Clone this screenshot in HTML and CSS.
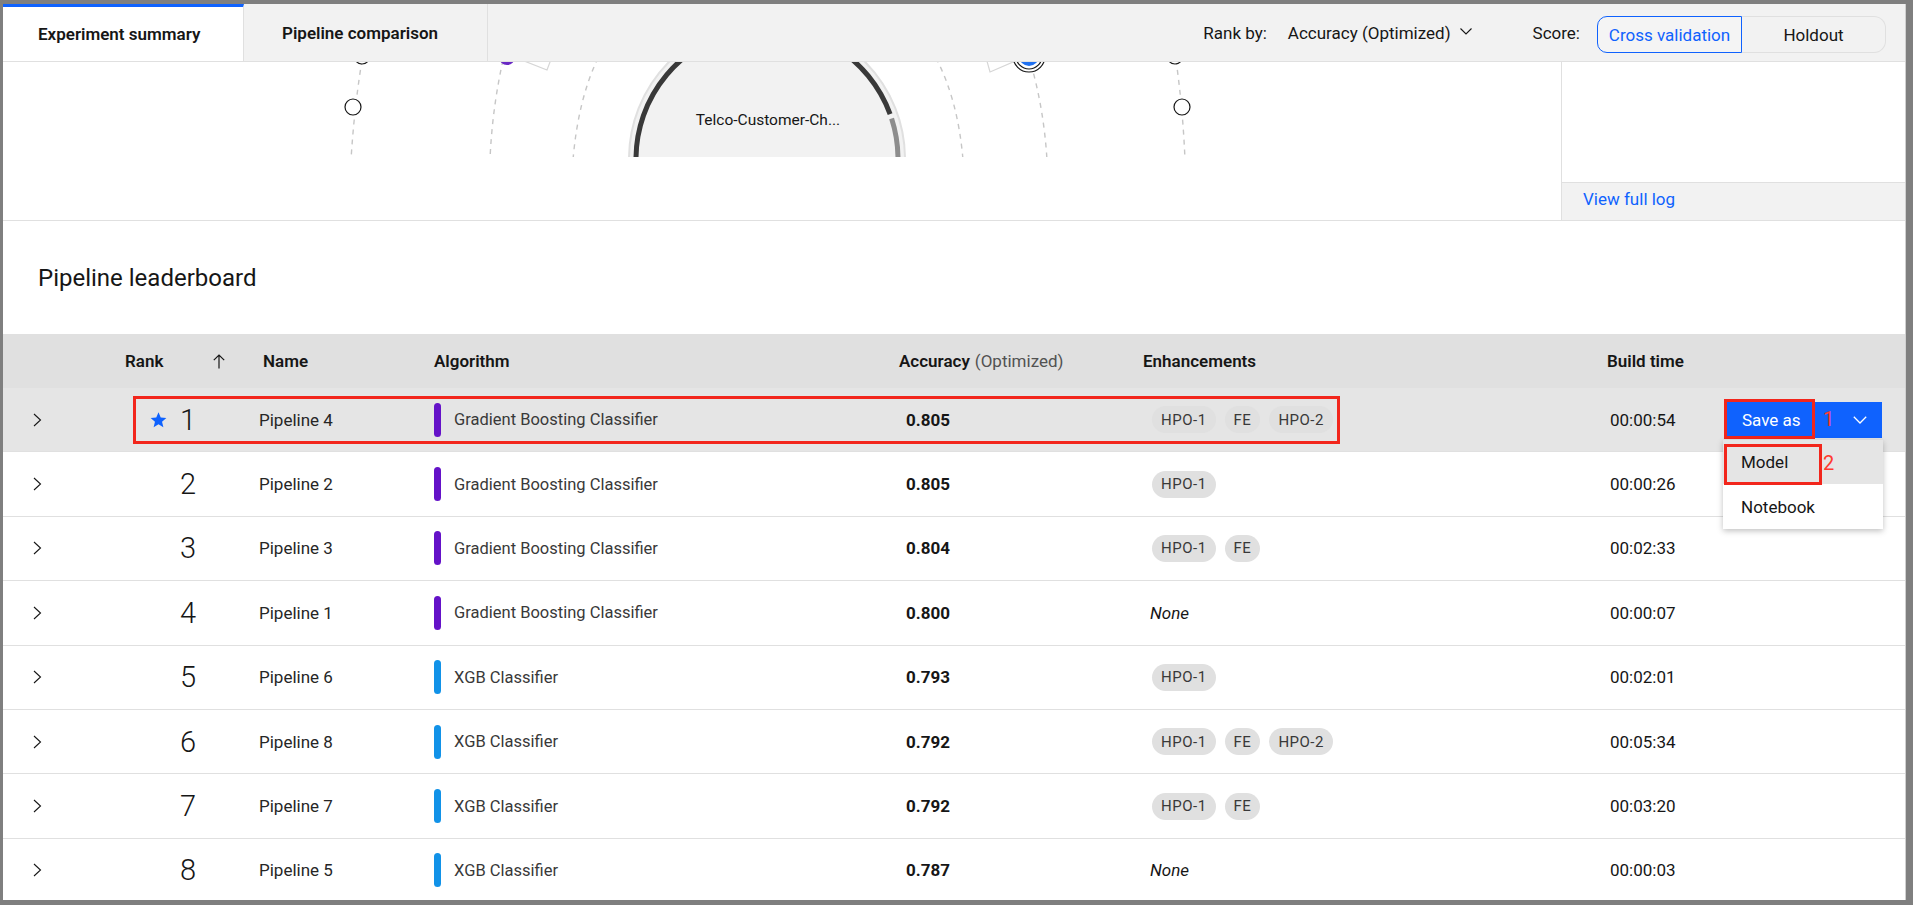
FILE: index.html
```html
<!DOCTYPE html>
<html lang="en">
<head>
<meta charset="utf-8">
<title>Experiment summary</title>
<link rel="stylesheet" href="styles.css">
</head>
<body>
<div class="frame">
  <header class="tabbar">
    <div class="tab tab-active">Experiment summary</div>
    <div class="tab tab-second">Pipeline comparison</div>
    <div class="tools">
      <span class="tool-label">Rank by:</span>
      <span class="tool-value">Accuracy (Optimized)</span>
      <svg class="caret" width="12" height="7" viewBox="0 0 12 7"><polyline points="0.5,0.5 6,6 11.5,0.5" fill="none" stroke="#161616" stroke-width="1.1"/></svg>
      <span class="tool-label score-label">Score:</span>
      <div class="seg">
        <span class="seg-item seg-on">Cross validation</span>
        <span class="seg-item seg-off">Holdout</span>
      </div>
    </div>
  </header>

  <section class="summary">
    <div class="diagram">
      <svg class="diagram-svg" width="1559" height="95" viewBox="3 62 1559 95">
        <g fill="none" stroke="#c6c6c6" stroke-width="1.4" stroke-dasharray="5 5">
          <path d="M362 60 Q354 110 351 160"/>
          <path d="M503 60 Q492 110 490 160"/>
          <path d="M598 58 Q578 100 573 160"/>
          <path d="M936 58 Q958 100 963 160"/>
          <path d="M1031 64 Q1044 110 1047 160"/>
          <path d="M1176 60 Q1183 110 1185 160"/>
        </g>
        <polyline points="514,57 547,70 553,54" fill="#fff" stroke="#d6d6d6" stroke-width="1.2"/>
        <polyline points="985,54 990,72 1020,59" fill="#fff" stroke="#d6d6d6" stroke-width="1.2"/>
        <circle cx="507" cy="57" r="8" fill="#6929c4"/>
        <circle cx="1029" cy="56" r="16" fill="#fff" stroke="#161616" stroke-width="1.2"/>
        <circle cx="1029" cy="56" r="13" fill="#fff" stroke="#161616" stroke-width="1.2"/>
        <circle cx="1029" cy="56" r="10" fill="#1f70f0"/>
        <circle cx="362" cy="56" r="8" fill="#fff" stroke="#161616" stroke-width="1.2"/>
        <circle cx="353" cy="107" r="8" fill="#fff" stroke="#161616" stroke-width="1.2"/>
        <circle cx="1175" cy="56" r="8" fill="#fff" stroke="#161616" stroke-width="1.2"/>
        <circle cx="1182" cy="107" r="8" fill="#fff" stroke="#161616" stroke-width="1.2"/>
        <circle cx="767" cy="159" r="138" fill="#f2f2f2" stroke="#e0e0e0" stroke-width="2"/>
        <path d="M636 159 A131 131 0 0 1 890.1 114.2" fill="none" stroke="#393939" stroke-width="5"/>
        <path d="M891.6 118.5 A131 131 0 0 1 898 159" fill="none" stroke="#8d8d8d" stroke-width="5"/>
        <text x="768" y="125" text-anchor="middle" class="node-label">Telco-Customer-Ch...</text>
      </svg>
    </div>
    <aside class="log">
      <div class="log-body"></div>
      <div class="log-foot"><span class="link">View full log</span></div>
    </aside>
  </section>

  <section class="leaderboard">
    <h2 class="lb-title">Pipeline leaderboard</h2>
    <div class="table">
      <div class="trow thead">
        <div class="c c0"></div>
        <div class="c c1 h-rank"><span>Rank</span>
          <svg class="sort" width="12" height="15" viewBox="0 0 12 15"><path d="M6 14.5V1 M0.8 6.2 L6 1 L11.2 6.2" fill="none" stroke="#161616" stroke-width="1.2"/></svg>
        </div>
        <div class="c c2 h-name">Name</div>
        <div class="c c3 h-alg">Algorithm</div>
        <div class="c c4 h-acc">Accuracy <span class="muted">(Optimized)</span></div>
        <div class="c c5 h-enh">Enhancements</div>
        <div class="c c6 h-time">Build time</div>
        <div class="c c7"></div>
      </div>

      <div class="trow tbody selected">
        <div class="c c0"><svg class="chev" width="9" height="14" viewBox="0 0 9 14"><polyline points="1,1 7.5,7 1,13" fill="none" stroke="#161616" stroke-width="1.1"/></svg></div>
        <div class="c c1 rank"><svg class="star" width="17" height="16" viewBox="0 0 24 23"><polygon points="12,0.5 15.2,8 23.3,8.6 17.1,13.9 19,21.8 12,17.6 5,21.8 6.9,13.9 0.7,8.6 8.8,8" fill="#0f62fe"/></svg><span class="num">1</span></div>
        <div class="c c2 name">Pipeline 4</div>
        <div class="c c3 alg"><span class="bar purple"></span>Gradient Boosting Classifier</div>
        <div class="c c4 acc">0.805</div>
        <div class="c c5 enh"><span class="tag">HPO-1</span><span class="tag">FE</span><span class="tag">HPO-2</span></div>
        <div class="c c6 time">00:00:54</div>
        <div class="c c7 actions">
          <div class="savebtn">
            <div class="save-main">Save as</div>
            <span class="note note1">1</span>
            <svg class="save-caret" width="14" height="8" viewBox="0 0 14 8"><polyline points="0.8,0.8 7,7 13.2,0.8" fill="none" stroke="#fff" stroke-width="1.3"/></svg>
          </div>
          <div class="menu">
            <div class="menu-item menu-hover"><span>Model</span></div>
            <div class="menu-item"><span>Notebook</span></div>
            <span class="note note2">2</span>
          </div>
        </div>
        <div class="row-mark"></div>
      </div>

      <div class="trow tbody">
        <div class="c c0"><svg class="chev" width="9" height="14" viewBox="0 0 9 14"><polyline points="1,1 7.5,7 1,13" fill="none" stroke="#161616" stroke-width="1.1"/></svg></div>
        <div class="c c1 rank"><span class="num">2</span></div>
        <div class="c c2 name">Pipeline 2</div>
        <div class="c c3 alg"><span class="bar purple"></span>Gradient Boosting Classifier</div>
        <div class="c c4 acc">0.805</div>
        <div class="c c5 enh"><span class="tag">HPO-1</span></div>
        <div class="c c6 time">00:00:26</div>
        <div class="c c7"></div>
      </div>

      <div class="trow tbody">
        <div class="c c0"><svg class="chev" width="9" height="14" viewBox="0 0 9 14"><polyline points="1,1 7.5,7 1,13" fill="none" stroke="#161616" stroke-width="1.1"/></svg></div>
        <div class="c c1 rank"><span class="num">3</span></div>
        <div class="c c2 name">Pipeline 3</div>
        <div class="c c3 alg"><span class="bar purple"></span>Gradient Boosting Classifier</div>
        <div class="c c4 acc">0.804</div>
        <div class="c c5 enh"><span class="tag">HPO-1</span><span class="tag">FE</span></div>
        <div class="c c6 time">00:02:33</div>
        <div class="c c7"></div>
      </div>

      <div class="trow tbody">
        <div class="c c0"><svg class="chev" width="9" height="14" viewBox="0 0 9 14"><polyline points="1,1 7.5,7 1,13" fill="none" stroke="#161616" stroke-width="1.1"/></svg></div>
        <div class="c c1 rank"><span class="num">4</span></div>
        <div class="c c2 name">Pipeline 1</div>
        <div class="c c3 alg"><span class="bar purple"></span>Gradient Boosting Classifier</div>
        <div class="c c4 acc">0.800</div>
        <div class="c c5 enh"><span class="none">None</span></div>
        <div class="c c6 time">00:00:07</div>
        <div class="c c7"></div>
      </div>

      <div class="trow tbody">
        <div class="c c0"><svg class="chev" width="9" height="14" viewBox="0 0 9 14"><polyline points="1,1 7.5,7 1,13" fill="none" stroke="#161616" stroke-width="1.1"/></svg></div>
        <div class="c c1 rank"><span class="num">5</span></div>
        <div class="c c2 name">Pipeline 6</div>
        <div class="c c3 alg"><span class="bar blue"></span>XGB Classifier</div>
        <div class="c c4 acc">0.793</div>
        <div class="c c5 enh"><span class="tag">HPO-1</span></div>
        <div class="c c6 time">00:02:01</div>
        <div class="c c7"></div>
      </div>

      <div class="trow tbody">
        <div class="c c0"><svg class="chev" width="9" height="14" viewBox="0 0 9 14"><polyline points="1,1 7.5,7 1,13" fill="none" stroke="#161616" stroke-width="1.1"/></svg></div>
        <div class="c c1 rank"><span class="num">6</span></div>
        <div class="c c2 name">Pipeline 8</div>
        <div class="c c3 alg"><span class="bar blue"></span>XGB Classifier</div>
        <div class="c c4 acc">0.792</div>
        <div class="c c5 enh"><span class="tag">HPO-1</span><span class="tag">FE</span><span class="tag">HPO-2</span></div>
        <div class="c c6 time">00:05:34</div>
        <div class="c c7"></div>
      </div>

      <div class="trow tbody">
        <div class="c c0"><svg class="chev" width="9" height="14" viewBox="0 0 9 14"><polyline points="1,1 7.5,7 1,13" fill="none" stroke="#161616" stroke-width="1.1"/></svg></div>
        <div class="c c1 rank"><span class="num">7</span></div>
        <div class="c c2 name">Pipeline 7</div>
        <div class="c c3 alg"><span class="bar blue"></span>XGB Classifier</div>
        <div class="c c4 acc">0.792</div>
        <div class="c c5 enh"><span class="tag">HPO-1</span><span class="tag">FE</span></div>
        <div class="c c6 time">00:03:20</div>
        <div class="c c7"></div>
      </div>

      <div class="trow tbody">
        <div class="c c0"><svg class="chev" width="9" height="14" viewBox="0 0 9 14"><polyline points="1,1 7.5,7 1,13" fill="none" stroke="#161616" stroke-width="1.1"/></svg></div>
        <div class="c c1 rank"><span class="num">8</span></div>
        <div class="c c2 name">Pipeline 5</div>
        <div class="c c3 alg"><span class="bar blue"></span>XGB Classifier</div>
        <div class="c c4 acc">0.787</div>
        <div class="c c5 enh"><span class="none">None</span></div>
        <div class="c c6 time">00:00:03</div>
        <div class="c c7"></div>
      </div>
    </div>
  </section>
</div>
</body>
</html>
```

FILE: styles.css
```css
* { box-sizing: border-box; }
html, body { margin: 0; padding: 0; }
body {
  width: 1913px;
  height: 905px;
  overflow: hidden;
  background: #7f7f7f;
  font-family: Roboto, "Noto Sans", "Liberation Sans", sans-serif;
  color: #161616;
}
.frame {
  position: relative;
  margin: 4px 7px 0 3px;
  width: 1903px;
  height: 896px;
  background: #fff;
  overflow: hidden;
  border-right: 1px solid #d0d0d0;
}

/* tab bar */
.tabbar {
  display: flex;
  align-items: stretch;
  height: 58px;
  background: #f2f2f2;
  border-bottom: 1px solid #e0e0e0;
}
.tab {
  display: flex;
  align-items: center;
  font-size: 17px;
  font-weight: 600;
  border-right: 1px solid #e0e0e0;
}
.tab-active {
  width: 241px;
  padding-left: 35px;
  background: #fff;
  border-top: 3px solid #0f62fe;
}
.tab-second {
  width: 244px;
  padding-left: 38px;
}
.tools {
  margin-left: auto;
  display: flex;
  align-items: center;
  padding-right: 19px;
  font-size: 17px;
}
.tool-label { color: #161616; }
.tool-value { margin-left: 21px; color: #161616; }
.caret { margin-left: 9px; margin-top: -2px; }
.score-label { margin-left: 61px; }
.seg {
  display: flex;
  margin-left: 17px;
  height: 37px;
  margin-top: 4px;
}
.seg-item {
  display: flex;
  align-items: center;
  justify-content: center;
  font-size: 17px;
}
.seg-on {
  width: 145px;
  border: 1px solid #0f62fe;
  border-radius: 10px 0 0 10px;
  color: #0f62fe;
  background: #f4f4f4;
}
.seg-off {
  width: 144px;
  border: 1px solid #e0e0e0;
  border-left: none;
  border-radius: 0 12px 12px 0;
  color: #161616;
}

/* summary */
.summary {
  display: flex;
  height: 159px;
  border-bottom: 1px solid #e0e0e0;
}
.diagram {
  flex: 1;
  overflow: hidden;
}
.diagram-svg { display: block; }
.node-label {
  font-family: Roboto, "Noto Sans", sans-serif;
  font-size: 15.5px;
  fill: #161616;
}
.log {
  width: 344px;
  border-left: 1px solid #e0e0e0;
  display: flex;
  flex-direction: column;
}
.log-body { flex: 1; }
.log-foot {
  height: 38px;
  background: #f2f2f2;
  border-top: 1px solid #e0e0e0;
  display: flex;
  align-items: center;
  padding-left: 21px;
  padding-bottom: 5px;
}
.link { color: #0f62fe; font-size: 17px; }

/* leaderboard */
.lb-title {
  margin: 0 0 40px 0;
  padding: 41px 0 0 35px;
  font-size: 24px;
  line-height: 32px;
  font-weight: 400;
  color: #161616;
}
.trow {
  display: grid;
  grid-template-columns: 100px 147px 180px 460px 245px 465px 115px 191px;
  align-items: center;
  position: relative;
}
.c {
  display: flex;
  align-items: center;
  height: 100%;
  white-space: nowrap;
}
.thead {
  height: 54px;
  background: #e0e0e0;
  font-size: 17px;
  font-weight: 600;
}
.h-rank { padding-left: 22px; }
.sort { margin-left: 50px; }
.h-name { padding-left: 13px; }
.h-alg { padding-left: 4px; }
.h-acc { padding-left: 9px; }
.muted { font-weight: 400; color: #525252; margin-left: 5px; }
.h-enh { padding-left: 8px; }
.h-time { padding-left: 7px; }

.tbody {
  height: 64.4px;
  border-bottom: 1px solid #e0e0e0;
  font-size: 17px;
  color: #262626;
}
.selected { background: #e5e5e5; z-index: 2; }
.c0 { padding-left: 30px; }
.chev { display: block; }
.rank {
  justify-content: flex-end;
  padding-right: 54px;
}
.star { margin-right: 13px; }
.num {
  font-size: 29px;
  font-weight: 300;
  color: #161616;
}
.name { padding-left: 9px; }
.alg { padding-left: 4px; color: #393939; font-size: 16.5px; }
.bar {
  display: inline-block;
  width: 7px;
  height: 34px;
  border-radius: 4px;
  margin-right: 13px;
}
.purple { background: #6412c8; }
.blue { background: #1192e8; }
.acc { padding-left: 16px; font-weight: 700; color: #161616; }
.enh { padding-left: 17px; gap: 9px; }
.tag {
  display: inline-flex;
  align-items: center;
  height: 27px;
  padding: 0 9px;
  border-radius: 14px;
  background: #e0e0e0;
  color: #393939;
  font-size: 15px;
  letter-spacing: 0.5px;
}
.none { font-style: italic; margin-left: -2px; color: #161616; }
.time { padding-left: 10px; color: #161616; }

.actions {
  position: relative;
  padding-left: 10px;
}
.savebtn {
  position: relative;
  display: flex;
  align-items: center;
  width: 157px;
  height: 36px;
  background: #0f62fe;
  color: #fff;
}
.save-main {
  position: relative;
  width: 90px;
  height: 100%;
  display: flex;
  align-items: center;
  padding-left: 17px;
  font-size: 17px;
}
.save-main::after {
  content: "";
  position: absolute;
  left: -1px;
  top: -3px;
  right: 0;
  bottom: -1px;
  border: 3px solid #f2261c;
}
.save-caret { margin-left: auto; margin-right: 15px; }
.note {
  position: absolute;
  font-size: 20px;
  line-height: 20px;
  color: #ff3b30;
}
.note1 { left: 98px; top: 7px; }
.menu {
  position: absolute;
  left: 8px;
  top: 52px;
  width: 160px;
  background: #fff;
  box-shadow: 0 2px 6px rgba(0, 0, 0, 0.25);
  z-index: 5;
}
.menu-item {
  height: 45px;
  display: flex;
  align-items: center;
  padding-left: 18px;
  font-size: 17px;
  color: #161616;
}
.menu-hover {
  position: relative;
  height: 44px;
  background: #e5e5e5;
}
.menu-hover::after {
  content: "";
  position: absolute;
  left: 1px;
  top: 4px;
  width: 92px;
  height: 35px;
  border: 3px solid #f2261c;
}
.note2 { left: 100px; top: 13px; }
.row-mark {
  position: absolute;
  left: 130px;
  top: 8px;
  width: 1207px;
  height: 48px;
  border: 3px solid #f2261c;
  pointer-events: none;
}
```
